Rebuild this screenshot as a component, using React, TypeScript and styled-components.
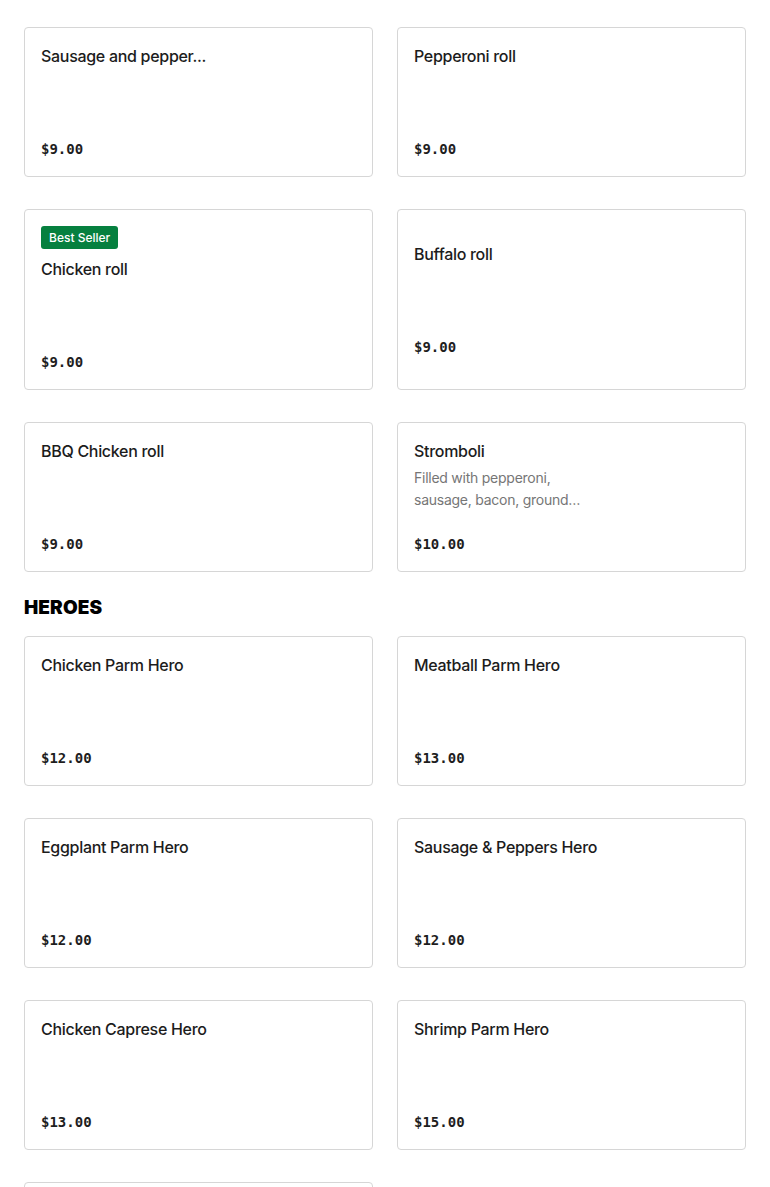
import React from "react";
import styled, { createGlobalStyle } from "styled-components";

const GlobalStyle = createGlobalStyle`
  html, body { margin: 0; padding: 0; background: #ffffff; }
  body { font-family: Inter, "Noto Sans", sans-serif; color: #252525; }
  * { box-sizing: border-box; }
`;

const Page = styled.main`
  padding: 27px 24px 0;
  width: 770px;
`;

const Grid = styled.div`
  display: grid;
  grid-template-columns: 1fr 1fr;
  column-gap: 24px;
  row-gap: 32px;
`;

const SectionTitle = styled.h2`
  margin: 24px 0 16px;
  font-family: Inter, sans-serif;
  font-weight: 900;
  font-size: 19px;
  line-height: 24px;
  letter-spacing: 0.1px;
  color: #000;
  text-transform: uppercase;
`;

const Card = styled.div`
  display: flex;
  flex-direction: column;
  justify-content: center;
  border: 1px solid #d6d6d6;
  border-radius: 4px;
  padding: 16px;
  background: #fff;
`;

const Badge = styled.span`
  align-self: flex-start;
  display: inline-flex;
  align-items: center;
  height: 23px;
  padding: 0 8px;
  margin-bottom: 8px;
  border-radius: 3px;
  background: #06803f;
  color: #fff;
  font-size: 12px;
  font-weight: 500;
`;

const TextBlock = styled.div`
  min-height: 72px;
  display: flex;
  flex-direction: column;
`;

const Title = styled.div`
  font-size: 16px;
  font-weight: 500;
  letter-spacing: -0.3px;
  line-height: 24px;
  color: #1c1c1c;
  white-space: nowrap;
`;

const Desc = styled.div`
  margin-top: 4px;
  max-width: 172px;
  font-size: 14px;
  letter-spacing: -0.25px;
  line-height: 22px;
  color: #767676;
  display: -webkit-box;
  -webkit-line-clamp: 2;
  -webkit-box-orient: vertical;
  overflow: hidden;
`;

const Price = styled.div`
  margin-top: 22px;
  font-family: "DejaVu Sans Mono", "Liberation Mono", monospace;
  font-weight: 700;
  font-size: 14px;
  line-height: 22px;
  color: #1e1e1e;
`;

type Item = { name: string; price: string; desc?: string; badge?: string };

const rolls: Item[] = [
  { name: "Sausage and pepper...", price: "$9.00" },
  { name: "Pepperoni roll", price: "$9.00" },
  { name: "Chicken roll", price: "$9.00", badge: "Best Seller" },
  { name: "Buffalo roll", price: "$9.00" },
  { name: "BBQ Chicken roll", price: "$9.00" },
  {
    name: "Stromboli",
    price: "$10.00",
    desc: "Filled with pepperoni, sausage, bacon, ground beef, ham and mozzarella",
  },
];

const heroes: Item[] = [
  { name: "Chicken Parm Hero", price: "$12.00" },
  { name: "Meatball Parm Hero", price: "$13.00" },
  { name: "Eggplant Parm Hero", price: "$12.00" },
  { name: "Sausage & Peppers Hero", price: "$12.00" },
  { name: "Chicken Caprese Hero", price: "$13.00" },
  { name: "Shrimp Parm Hero", price: "$15.00" },
  { name: "Veal Parm Hero", price: "$16.00" },
];

const MenuCard = ({ item }: { item: Item }) => (
  <Card>
    {item.badge && <Badge>{item.badge}</Badge>}
    <TextBlock>
      <Title>{item.name}</Title>
      {item.desc && <Desc>{item.desc}</Desc>}
    </TextBlock>
    <Price>{item.price}</Price>
  </Card>
);

export default function App() {
  return (
    <>
      <GlobalStyle />
      <Page>
        <Grid>
          {rolls.map((it) => (
            <MenuCard key={it.name} item={it} />
          ))}
        </Grid>
        <SectionTitle>Heroes</SectionTitle>
        <Grid>
          {heroes.map((it) => (
            <MenuCard key={it.name} item={it} />
          ))}
        </Grid>
      </Page>
    </>
  );
}
